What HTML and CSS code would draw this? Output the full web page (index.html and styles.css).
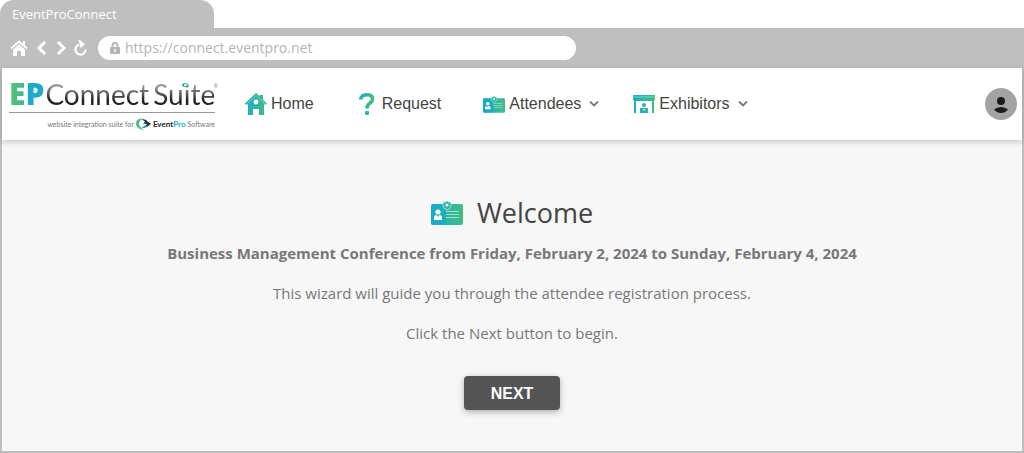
FILE: index.html
```html
<!DOCTYPE html>
<html lang="en">
<head>
    <meta charset="UTF-8">
    <meta name="viewport" content="width=device-width, initial-scale=1.0">
    <title>EventProConnect</title>
    <link rel="stylesheet" href="styles.css">
</head>
<body>
    <!-- shared gradient and badge icon -->
    <svg class="defs" width="0" height="0" aria-hidden="true">
        <defs>
            <linearGradient id="brand" x1="0" y1="0" x2="1" y2="0">
                <stop offset="0" stop-color="#1caccb"/>
                <stop offset="1" stop-color="#3fbd82"/>
            </linearGradient>
            <symbol id="badge" viewBox="0 0 32 24">
                <rect x="0" y="3" width="32" height="21" rx="2" fill="url(#brand)"/>
                <path d="M0 5a2 2 0 0 1 2-2h13v21H2a2 2 0 0 1-2-2z" fill="#16a6cc" opacity=".45"/>
                <circle cx="7" cy="11" r="2.6" fill="#fff"/>
                <path d="M3 19v-2q0-3 2.500-3L7 16l1.500-2Q11 14 11 17v2z" fill="#fff"/>
                <path d="M15 10.500h13M15 13.500h13M15 16.500h13" stroke="#a4e2bf" stroke-width="1"/>
                <path d="M12 1.500q2.500 0 4-1.500 1.500 1.500 4 1.500v3q0 3-4 4.500-4-1.500-4-4.500z" fill="#2db5a6" stroke="#a2dfd5" stroke-width="1"/>
                <circle cx="16" cy="4" r="1.500" fill="#fff"/>
            </symbol>
        </defs>
    </svg>

    <div class="browser">
        <div class="tab">EventProConnect</div>
        <div class="toolbar">
            <button class="tool" aria-label="Home page">
                <svg width="18" height="18" viewBox="0 0 18 18"><path d="M1 9.500L9 2.500l8 7" fill="none" stroke="#fff" stroke-width="2"/><path d="M13 2h2v5l-2-2zM3 10.500l6-5.300 6 5.300V17h-4v-5H7v5H3z" fill="#fff"/></svg>
            </button>
            <button class="tool" aria-label="Back">
                <svg width="12" height="16" viewBox="0 0 12 16"><path d="M9 2L3 8l6 6" fill="none" stroke="#fff" stroke-width="3"/></svg>
            </button>
            <button class="tool" aria-label="Forward">
                <svg width="12" height="16" viewBox="0 0 12 16"><path d="M2 2l6 6-6 6" fill="none" stroke="#fff" stroke-width="3"/></svg>
            </button>
            <button class="tool" aria-label="Reload">
                <svg width="14" height="16" viewBox="0 0 14 16"><path d="M5 4.800A5 5 0 1 0 11.500 9.500" fill="none" stroke="#fff" stroke-width="2.200"/><path d="M4.500 0H6l5 4.500-4.500 3.500z" fill="#fff"/></svg>
            </button>
            <label class="address">
                <svg width="10" height="12" viewBox="0 0 10 12"><path d="M2.500 6V3.500a2.500 2.500 0 0 1 5 0V6" fill="none" stroke="#b5b5b5" stroke-width="1.800"/><rect x="0" y="5" width="10" height="7" rx="1" fill="#b5b5b5"/><path d="M5 7v3" stroke="#fff" stroke-width="1.500"/></svg>
                <input type="text" aria-label="Address" value="https://connect.eventpro.net">
            </label>
        </div>
    </div>

    <div class="page">
        <header class="header">
            <a class="logo" href="#">
                <span class="logo-name">
                    <span class="logo-ep">EP</span>
                    <span class="logo-text">Connect</span>
                    <span class="logo-text">Suite</span>
                    <span class="logo-mark">®</span>
                    <svg class="logo-dot" width="6" height="4" viewBox="0 0 6 4"><ellipse cx="3" cy="2" rx="3" ry="2" fill="#33b48f"/><ellipse cx="3.300" cy="2" rx="1.400" ry="1" fill="#fff"/></svg>
                </span>
                <span class="logo-sub">
                    website integration suite for
                    <svg width="15" height="12" viewBox="0 0 15 12"><path d="M8 .5Q0 0 0 5.500T8 12Q3 9 3 5.500T8 .5z" fill="#4dbb73"/><path d="M6 1.500q4-1 6 2.500l3 1.500q-2 3.500-9 4.500l5-3.500-2-1-2 .5 2-2.500z" fill="#1b333b"/><path d="M5 9.500q4 1.500 8-2l-5 1z" fill="#1caccb"/></svg>
                    <b>Event<i>Pro</i></b>
                    Software
                </span>
            </a>
            <nav class="nav">
                <a class="nav-item home" href="#">
                    <svg width="22" height="22" viewBox="0 0 22 22"><path d="M0 10.500L11 0l3.500 3.300V2H18v4.700l4 3.800-1.500 1.500L19 10.800V22h-5v-6H8v6H3V10.800L1.500 12z" fill="url(#brand)"/><path d="M2 11l9-8.500 9 8.500" fill="none" stroke="#8edbd0" stroke-width=".7"/><circle cx="11" cy="9" r="2.400" fill="#fff"/></svg>
                    Home
                </a>
                <a class="nav-item request" href="#">
                    <svg width="16" height="22" viewBox="0 0 16 22"><path d="M1.500 6.500Q2.500 1.800 8 1.800q5.500 0 5.500 4.200 0 2.500-3 4.500-2.500 1.500-2.500 5" fill="none" stroke="url(#brand)" stroke-width="3.500"/><rect x="6" y="18" width="4" height="4" rx="1" fill="#2eb5a5"/></svg>
                    Request
                </a>
                <a class="nav-item attendees" href="#">
                    <svg width="22" height="17"><use href="#badge"/></svg>
                    Attendees
                    <svg class="chevron" width="10" height="6" viewBox="0 0 10 6"><path d="M1 .5l4 4 4-4" fill="none" stroke="#777" stroke-width="1.800"/></svg>
                </a>
                <a class="nav-item" href="#">
                    <svg width="22" height="18" viewBox="0 0 22 18"><path d="M0 0h22v5h-1v13h-2V6H3v12H1V5H0z" fill="url(#brand)"/><path d="M0 2h22" stroke="#8adbc7" stroke-width=".8"/><circle cx="11" cy="10" r="2" fill="#27b2b3"/><path d="M7 13h8v5H7z" fill="url(#brand)"/><path d="M10 14h2l-1 2z" fill="#fff"/></svg>
                    Exhibitors
                    <svg class="chevron" width="10" height="6" viewBox="0 0 10 6"><path d="M1 .5l4 4 4-4" fill="none" stroke="#777" stroke-width="1.800"/></svg>
                </a>
            </nav>
            <button class="user" aria-label="Account">
                <svg width="32" height="32" viewBox="0 0 32 32"><circle cx="16" cy="13" r="4" fill="#1a1a1a"/><path d="M9 21.500q3-2.500 7-2.500t7 2.500Q20 25 16 25t-7-3.500z" fill="#1a1a1a"/></svg>
            </button>
        </header>

        <main class="welcome">
            <h1>
                <svg width="32" height="24"><use href="#badge"/></svg>
                Welcome
            </h1>
            <p class="event">Business Management Conference from Friday, February 2, 2024 to Sunday, February 4, 2024</p>
            <p>This wizard will guide you through the attendee registration process.</p>
            <p>Click the Next button to begin.</p>
            <button class="next">NEXT</button>
        </main>
    </div>
</body>
</html>
```
FILE: styles.css
```css
* {
    box-sizing: border-box;
}
body {
    margin: 0;
    min-height: 100vh;
    display: flex;
    flex-direction: column;
    background: #fff;
    font-family: "Open Sans", sans-serif;
}
button {
    padding: 0;
    border: 0;
    background: none;
}
a {
    color: inherit;
    text-decoration: none;
}
svg {
    display: block;
    flex: none;
}
.defs {
    position: absolute;
}

/* browser bar */
.tab {
    width: 214px;
    padding: 0 12px;
    border-radius: 14px 14px 0 0;
    background: #bfbfbf;
    color: #fff;
    font-size: 13px;
    line-height: 28px;
}
.toolbar {
    display: flex;
    align-items: center;
    gap: 8px;
    height: 40px;
    padding: 0 10px;
    background: #bfbfbf;
}
.tool:nth-child(4) {
    margin-left: -2px;
}
.address {
    display: flex;
    align-items: center;
    gap: 5px;
    flex: 0 1 478px;
    height: 24px;
    margin-left: 2px;
    padding: 0 12px;
    border-radius: 12px;
    background: #fff;
}
.address input {
    flex: 1;
    min-width: 0;
    padding: 0;
    border: 0;
    background: none;
    color: #b5b5b5;
    font: 14px/24px "Open Sans", sans-serif;
}

/* site */
.page {
    flex: 1;
    display: flex;
    flex-direction: column;
    border: solid #bfbfbf;
    border-width: 0 2px 2px;
    background: #f7f7f7;
}
.header {
    display: flex;
    align-items: center;
    height: 72px;
    padding: 0 5px 0 7px;
    background: #fff;
    box-shadow: 0 2px 6px rgba(0, 0, 0, 0.2);
}
.logo {
    flex: none;
    width: 206px;
    margin-right: 30px;
    padding-top: 6px;
}
.logo-name {
    position: relative;
    display: flex;
    align-items: flex-start;
    height: 34px;
    border-bottom: 1px solid #999;
    line-height: 30px;
    white-space: nowrap;
}
.logo-ep,
.logo-text {
    color: transparent;
    background-clip: text;
    -webkit-background-clip: text;
}
.logo-ep {
    margin-right: 1px;
    font-size: 30px;
    font-weight: 800;
    background-image: linear-gradient(90deg, #5cc276 0, #3dba8e 46%, #1caccb 50%);
}
.logo-text {
    margin-right: 4px;
    font-family: Lato, sans-serif;
    font-size: 28px;
    background-image: linear-gradient(#999 25%, #222 70%);
}
.logo-mark {
    position: absolute;
    top: 4px;
    right: -3px;
    color: #888;
    font-size: 5px;
    line-height: 6px;
}
.logo-dot {
    position: absolute;
    top: 4px;
    right: 27px;
}
.logo-sub {
    display: flex;
    align-items: center;
    justify-content: flex-end;
    gap: 2px;
    height: 22px;
    color: #777;
    font: 7px/22px Lato, sans-serif;
    white-space: nowrap;
}
.logo-sub b {
    color: #222;
    font-size: 8px;
}
.logo-sub i {
    color: #1caccb;
    font-style: normal;
}
.nav {
    display: flex;
    color: #444;
    font: 16px/24px "Liberation Sans", Arial, sans-serif;
}
.nav-item {
    display: flex;
    align-items: center;
    gap: 4px;
    margin-right: 34px;
}
.home {
    margin-right: 45px;
}
.request {
    gap: 7px;
    margin-right: 42px;
}
.chevron {
    margin-left: 4px;
}
.user {
    flex: none;
    margin-left: auto;
    border-radius: 50%;
    background: #a3a3a3;
}
.welcome {
    display: flex;
    flex-direction: column;
    align-items: center;
    padding: 53px 16px 40px;
    color: #777;
    font-size: 15px;
    line-height: 20px;
    text-align: center;
}
.welcome h1 {
    display: flex;
    align-items: center;
    gap: 14px;
    margin: 0 0 10px;
    color: #444;
    font-size: 27px;
    font-weight: 400;
    line-height: 40px;
}
.welcome p {
    margin: 0 0 20px;
}
.welcome .event {
    font-weight: 700;
}
.next {
    width: 96px;
    height: 34px;
    margin-top: 13px;
    padding-top: 2px;
    border-radius: 4px;
    background: #545454;
    box-shadow: 0 2px 6px rgba(0, 0, 0, 0.3);
    color: #fff;
    font: bold 16px/32px "Liberation Sans", Arial, sans-serif;
}
```
